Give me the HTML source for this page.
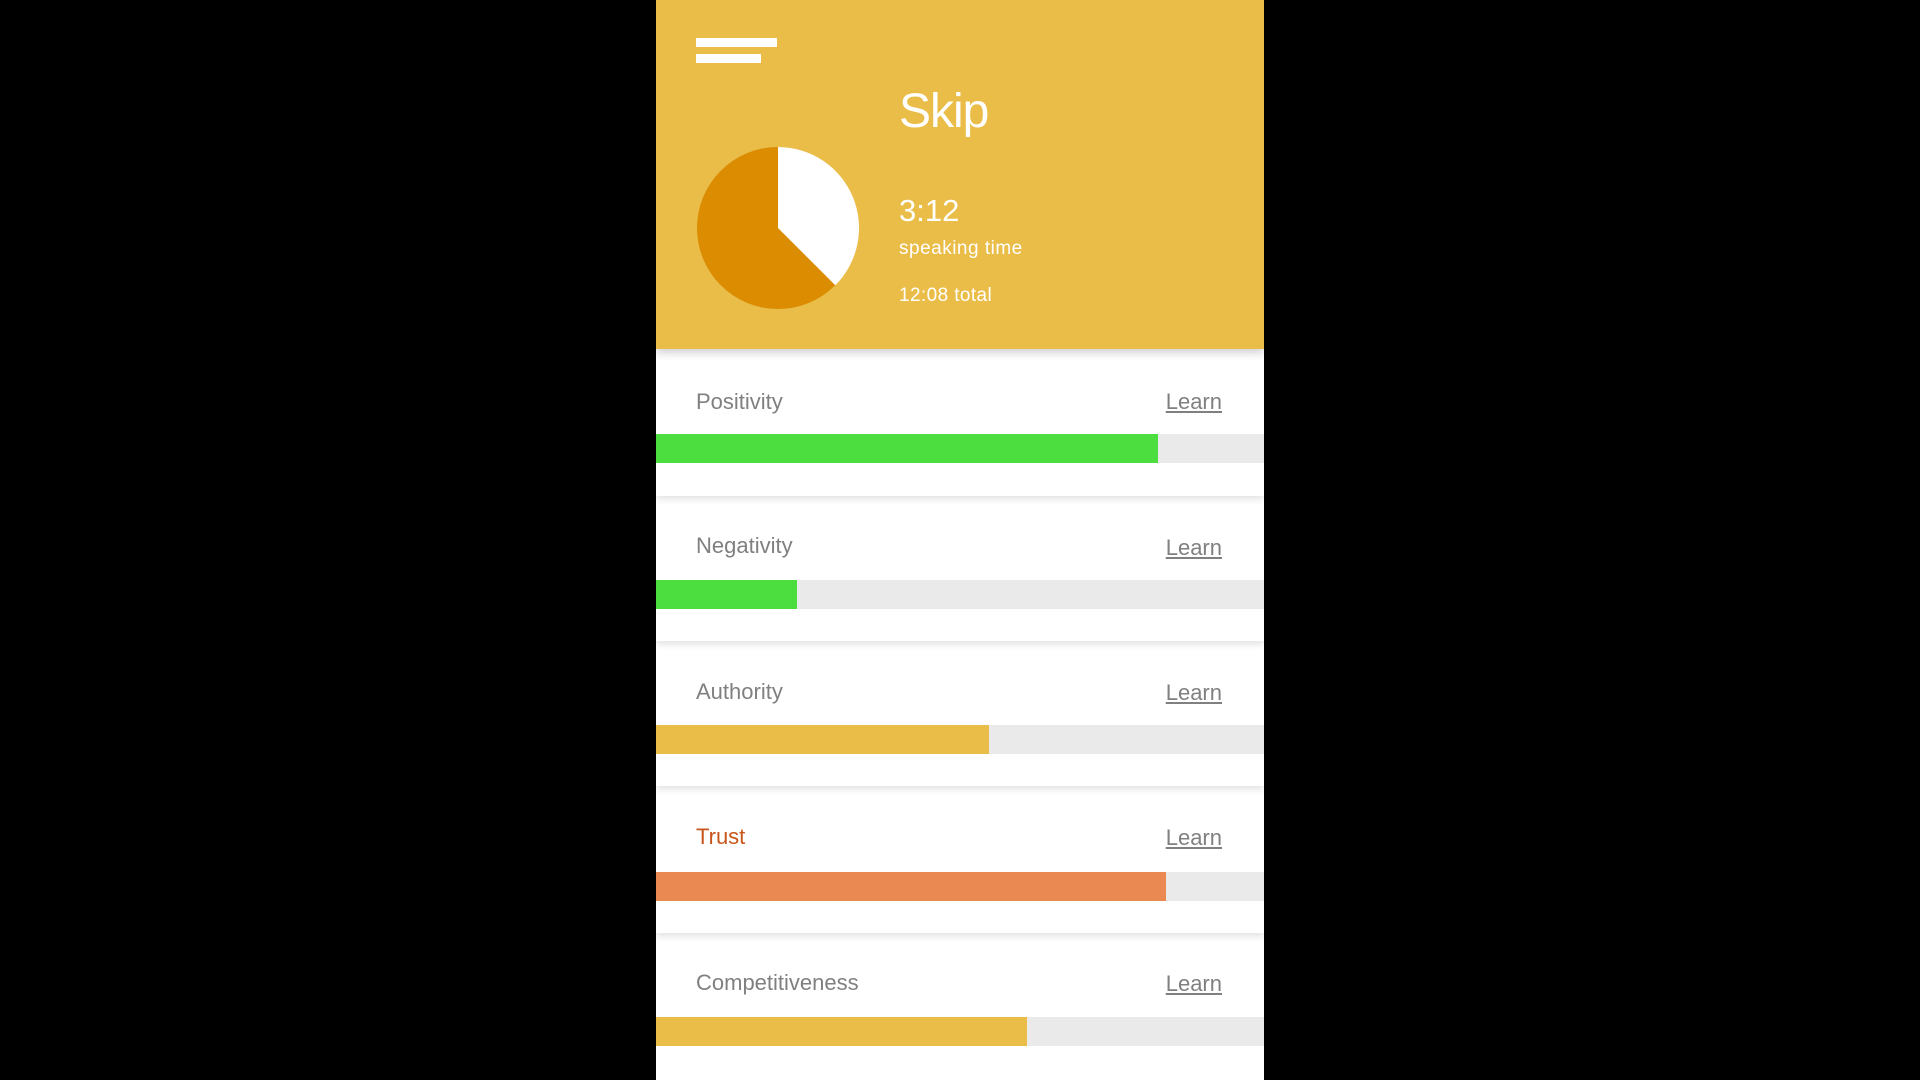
<!DOCTYPE html>
<html><head><meta charset="utf-8"><style>
*{margin:0;padding:0;box-sizing:border-box}
body{width:1920px;height:1080px;background:#000;position:relative;overflow:hidden;font-family:"Liberation Sans",Arial,sans-serif}
#p{position:absolute;left:656px;top:0;width:608px;height:1080px;background:#fff;overflow:hidden}
.hdr{position:absolute;left:0;top:0;width:608px;height:349px;background:#EABD48;box-shadow:0 4px 8px rgba(0,0,0,.18);z-index:10}
.l{position:absolute;background:#fff;height:9px;left:40px}
.t{position:absolute;color:#fff;white-space:nowrap}
.card{position:absolute;left:0;width:608px;background:#fff;box-shadow:0 3px 7px rgba(0,0,0,.12)}
.card .n{position:absolute;left:40px;font-size:22px;color:#808080;line-height:1}
.card .lr{position:absolute;right:42px;font-size:22px;color:#808080;text-decoration:underline;line-height:1}
.card .bg{position:absolute;left:0;width:608px;height:29px;background:#EAEAEA}
.card .f{position:absolute;left:0;top:0;height:29px}
</style></head><body>
<div id="p">
<div class="hdr">
<div class="l" style="top:38px;width:81px"></div>
<div class="l" style="top:54px;width:65px"></div>
<div class="t" style="left:243px;top:84px;font-size:48px;letter-spacing:-1px">Skip</div>
<svg style="position:absolute;left:41px;top:147px" width="162" height="162" viewBox="0 0 162 162">
<circle cx="81" cy="81" r="81" fill="#DB8C00"/>
<path d="M81 81 L81 0 A81 81 0 0 1 138.3 138.3 Z" fill="#fff"/>
</svg>
<div class="t" style="left:243px;top:193px;font-size:31px">3:12</div>
<div class="t" style="left:243px;top:238px;font-size:19px;letter-spacing:.5px">speaking time</div>
<div class="t" style="left:243px;top:285px;font-size:19px;letter-spacing:.4px">12:08 total</div>
</div>

<div class="card" style="top:349px;height:147px;z-index:9">
<div class="n" style="top:42px">Positivity</div><div class="lr" style="top:42px">Learn</div>
<div class="bg" style="top:85px"><div class="f" style="width:502px;background:#4CDD3F"></div></div>
</div>
<div class="card" style="top:496px;height:145px;z-index:8">
<div class="n" style="top:39px">Negativity</div><div class="lr" style="top:41px">Learn</div>
<div class="bg" style="top:84px"><div class="f" style="width:141px;background:#4CDD3F"></div></div>
</div>
<div class="card" style="top:641px;height:145px;z-index:7">
<div class="n" style="top:40px">Authority</div><div class="lr" style="top:41px">Learn</div>
<div class="bg" style="top:84px"><div class="f" style="width:333px;background:#EABD48"></div></div>
</div>
<div class="card" style="top:786px;height:147px;z-index:6">
<div class="n" style="top:40px;color:#C8551B">Trust</div><div class="lr" style="top:41px">Learn</div>
<div class="bg" style="top:86px"><div class="f" style="width:510px;background:#EA8A52"></div></div>
</div>
<div class="card" style="top:933px;height:147px;z-index:5">
<div class="n" style="top:39px">Competitiveness</div><div class="lr" style="top:40px">Learn</div>
<div class="bg" style="top:84px"><div class="f" style="width:371px;background:#EABD48"></div></div>
</div>
</div>
</body></html>
